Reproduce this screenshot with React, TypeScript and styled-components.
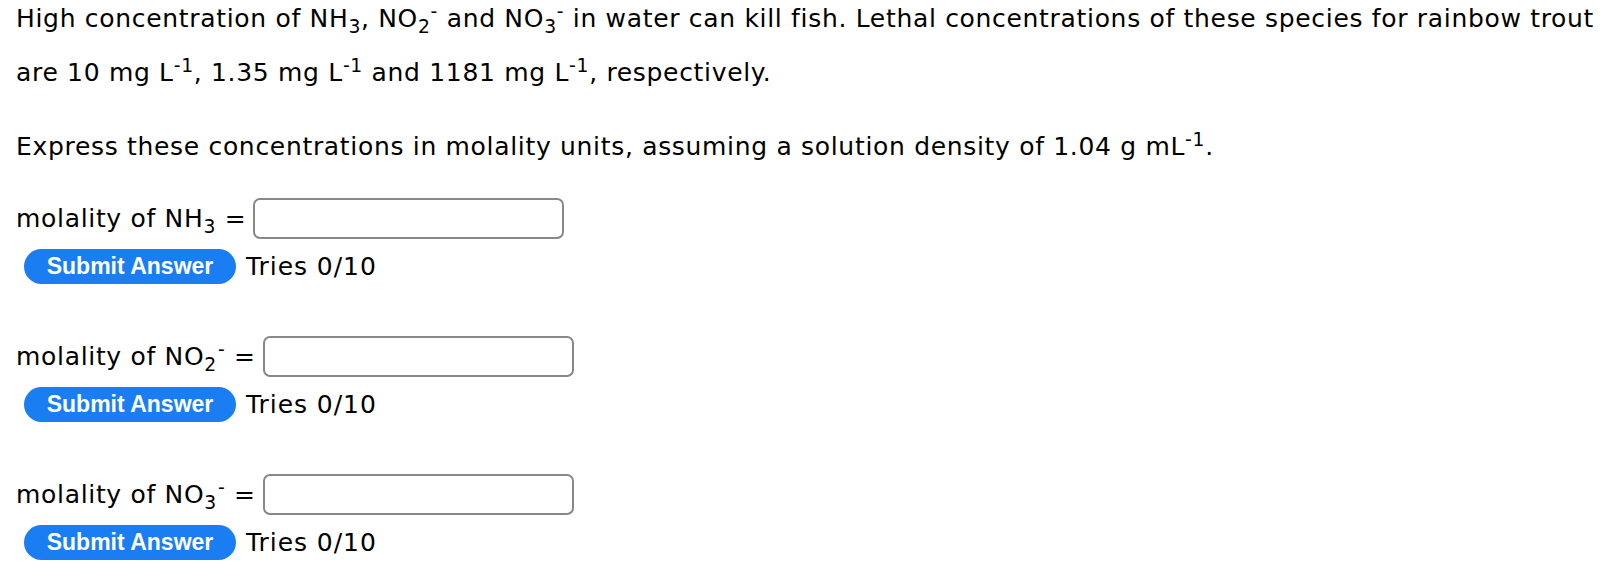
import styled, { createGlobalStyle } from 'styled-components'

const GlobalStyle = createGlobalStyle`
  body {
    margin: 0;
    background: #fff;
    color: #000;
    font-family: "DejaVu Sans", Verdana, sans-serif;
    font-size: 25px;
    letter-spacing: 0.68px;
  }
`

const Page = styled.main`
  padding: 0 2px 0 16px;
`

const Text = styled.p`
  margin: 0;
  line-height: 52px;

  &:first-child {
    margin-top: -8px;
    line-height: 54px;
  }

  & + & {
    margin-top: 21px;
  }

  sup,
  sub {
    font-size: 0.75em;
    line-height: 0;
  }
`

const Question = styled.section`
  margin-top: 25px;

  & + & {
    margin-top: 52px;
  }
`

const Prompt = styled.div`
  display: flex;
  align-items: center;
  height: 41px;
`

const Label = styled.span`
  white-space: pre;

  sup,
  sub {
    font-size: 0.75em;
    line-height: 0;
  }

  sup {
    margin-left: 1px;
  }
`

const AnswerInput = styled.input`
  box-sizing: border-box;
  width: 311px;
  height: 41px;
  margin-left: 7px;
  border: 2px solid #888;
  border-radius: 7px;
  font: inherit;
  outline: none;
`

const Controls = styled.div`
  display: flex;
  align-items: center;
  gap: 10px;
  margin-top: 10px;
  padding-left: 8px;
`

const SubmitButton = styled.button`
  height: 35px;
  width: 212px;
  border: none;
  border-radius: 18px;
  background: #1a7ef2;
  color: #fff;
  font-family: "Liberation Sans", Arial, sans-serif;
  font-weight: 700;
  font-size: 23px;
  letter-spacing: 0;
  cursor: pointer;
`

const Tries = styled.span`
  line-height: 1;
  letter-spacing: 0.95px;
`

const questions = [
  { id: 'nh3', species: <>NH<sub>3</sub></> },
  { id: 'no2', species: <>NO<sub>2</sub><sup>-</sup></> },
  { id: 'no3', species: <>NO<sub>3</sub><sup>-</sup></> },
]

const App = () => (
  <Page>
    <GlobalStyle />
    <Text>
      High concentration of NH<sub>3</sub>, NO<sub>2</sub><sup>-</sup> and NO<sub>3</sub><sup>-</sup> in
      water can kill fish. Lethal concentrations of these species for rainbow trout are 10 mg L
      <sup>-1</sup>, 1.35 mg L<sup>-1</sup> and 1181 mg L<sup>-1</sup>, respectively.
    </Text>
    <Text>
      Express these concentrations in molality units, assuming a solution density of 1.04 g mL
      <sup>-1</sup>.
    </Text>
    {questions.map((q) => (
      <Question key={q.id}>
        <Prompt>
          <Label>molality of {q.species} =</Label>
          <AnswerInput type="text" aria-label={q.id} />
        </Prompt>
        <Controls>
          <SubmitButton type="button">Submit Answer</SubmitButton>
          <Tries>Tries 0/10</Tries>
        </Controls>
      </Question>
    ))}
  </Page>
)

export default App
